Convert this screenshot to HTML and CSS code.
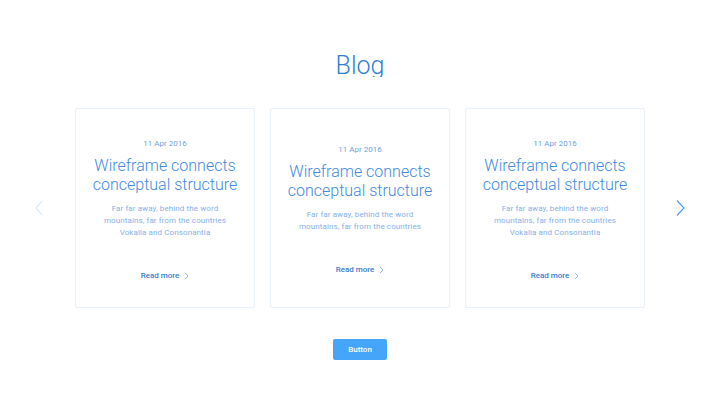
FILE: index.html
```html
<!DOCTYPE html>
<html lang="en">
<head>
<meta charset="utf-8">
<title>Blog</title>
<link rel="stylesheet" href="styles.css">
</head>
<body>
<main class="page">
  <h1 class="heading">Blog</h1>
  <section class="carousel">
    <button class="arrow arrow-prev" aria-label="Previous">
      <svg width="22" height="16" viewBox="0 0 22 16"><path d="M14 1 L8 8 L14 15" fill="none" stroke="currentColor" stroke-width="1.1"/></svg>
    </button>
    <div class="cards">
      <article class="card">
        <div class="date">11 Apr 2016</div>
        <h2 class="title">Wireframe connects conceptual structure</h2>
        <p class="text">Far far away, behind the word mountains, far from the countries Vokalia and Consonantia</p>
        <a class="more" href="#">Read more <svg class="chev" width="5" height="8" viewBox="0 0 5 8"><path d="M1 0.8 L4 4 L1 7.2" fill="none" stroke="currentColor" stroke-width="0.9"/></svg></a>
      </article>
      <article class="card">
        <div class="date">11 Apr 2016</div>
        <h2 class="title">Wireframe connects conceptual structure</h2>
        <p class="text">Far far away, behind the word mountains, far from the countries</p>
        <a class="more" href="#">Read more <svg class="chev" width="5" height="8" viewBox="0 0 5 8"><path d="M1 0.8 L4 4 L1 7.2" fill="none" stroke="currentColor" stroke-width="0.9"/></svg></a>
      </article>
      <article class="card">
        <div class="date">11 Apr 2016</div>
        <h2 class="title">Wireframe connects conceptual structure</h2>
        <p class="text">Far far away, behind the word mountains, far from the countries Vokalia and Consonantia</p>
        <a class="more" href="#">Read more <svg class="chev" width="5" height="8" viewBox="0 0 5 8"><path d="M1 0.8 L4 4 L1 7.2" fill="none" stroke="currentColor" stroke-width="0.9"/></svg></a>
      </article>
    </div>
    <button class="arrow arrow-next" aria-label="Next">
      <svg width="22" height="16" viewBox="0 0 22 16"><path d="M8 0.5 L15 8 L8 15.5" fill="none" stroke="currentColor" stroke-width="1.1"/></svg>
    </button>
  </section>
  <div class="actions">
    <button class="btn">Button</button>
  </div>
</main>
</body>
</html>
```
FILE: styles.css
```css
* { box-sizing: border-box; }
html, body { margin: 0; padding: 0; background: #ffffff; }
body { font-family: Roboto, "Liberation Sans", Arial, sans-serif; }

.page {
  width: 720px;
  height: 400px;
  padding-top: 53px;
}

.heading {
  margin: 0;
  height: 24px;
  overflow: hidden;
  font-size: 25px;
  line-height: 1;
  font-weight: 300;
  text-align: center;
  color: #2f7fd8;
}

.carousel {
  margin-top: 31px;
  display: flex;
  align-items: center;
  padding-left: 28px;
}

.arrow {
  width: 22px;
  height: 16px;
  padding: 0;
  border: 0;
  background: none;
  display: flex;
}
.arrow-prev { color: #d3e3fa; margin-right: 25px; }
.arrow-next { color: #4a9cf0; margin-left: 24px; }

.cards {
  display: flex;
  gap: 15px;
}

.card {
  width: 180px;
  height: 200px;
  padding-top: 3px;
  border: 1px solid #e7f0fb;
  border-radius: 2px;
  display: flex;
  flex-direction: column;
  align-items: center;
  justify-content: center;
  text-align: center;
}

.date {
  font-size: 8px;
  line-height: 12px;
  color: #6f9fdc;
}

.title {
  margin: 6px 0 0;
  font-size: 16px;
  line-height: 19px;
  font-weight: 300;
  color: #3f8ae0;
  width: 160px;
}

.text {
  margin: 9px 0 0;
  width: 130px;
  font-size: 8px;
  line-height: 12px;
  letter-spacing: 0.1px;
  color: #86b1e8;
}

.more {
  margin-top: 31px;
  font-size: 8px;
  line-height: 12px;
  font-weight: 500;
  color: #3a7cca;
  text-decoration: none;
  display: flex;
  align-items: center;
}
.chev {
  margin-left: 5px;
  color: #7fa8df;
}

.actions {
  margin-top: 31px;
  display: flex;
  justify-content: center;
}

.btn {
  width: 54px;
  height: 21px;
  border: 0;
  border-radius: 2px;
  background: #45a5f8;
  color: #ffffff;
  font-family: Roboto, "Liberation Sans", Arial, sans-serif;
  font-size: 8px;
  font-weight: 500;
  padding: 0;
}
```
